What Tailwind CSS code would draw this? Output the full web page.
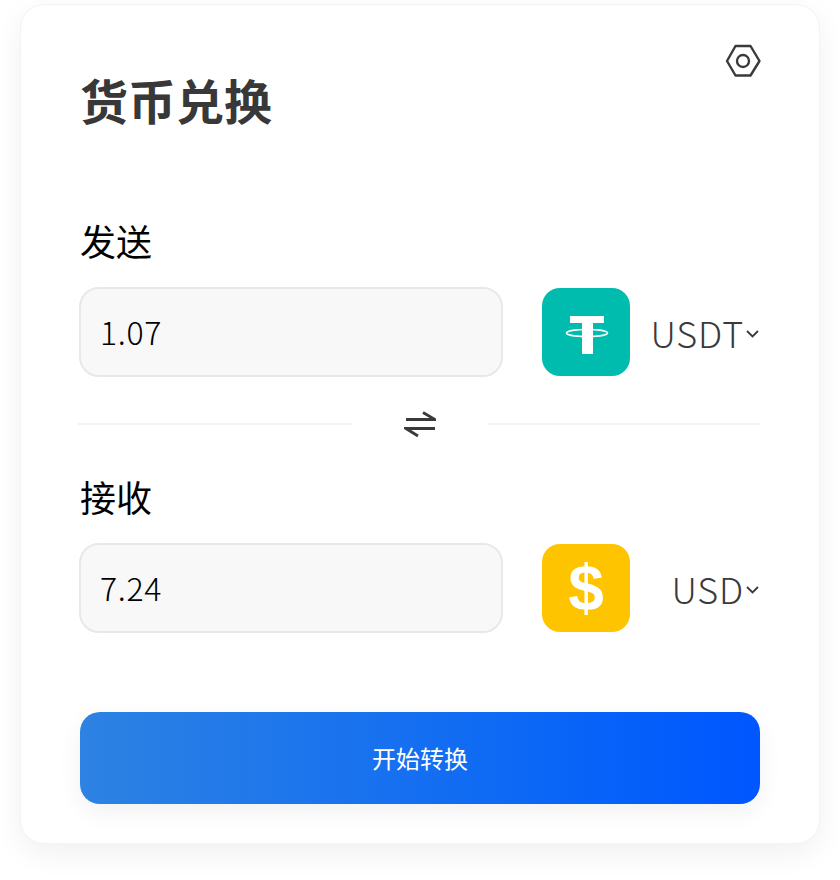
<!DOCTYPE html>
<html lang="zh-CN">
<head>
    <meta charset="UTF-8">
    <title>货币兑换</title>
    <script src="https://cdn.jsdelivr.net/npm/@tailwindcss/browser@4"></script>
</head>
<body class="bg-white font-['Noto_Sans_CJK_SC','Noto_Sans',sans-serif]">
    <div class="w-[840px] h-[880px] overflow-hidden pt-[4px] pl-[20px]">
        <!-- Card -->
        <main class="w-[800px] h-[840px] bg-white rounded-[24px] border border-[#f3f3f3] shadow-[0_10px_30px_rgba(0,0,0,0.06)] pt-[38px] px-[59px]">
            <div class="flex justify-end h-[36px] -mr-[1px] -mb-[16px]">
                <svg width="36" height="36" viewBox="0 0 36 36" fill="none" stroke="#3a3a3a" stroke-width="2.4" stroke-linejoin="round">
                    <path d="M10.5 3h15L34.500 18l-9 14.500h-15L2 18z"/>
                    <circle cx="18" cy="18" r="6"/>
                </svg>
            </div>
            <h1 class="text-[48px] leading-[72px] font-bold text-[#383838]">货币兑换</h1>

            <!-- Send -->
            <div class="mt-[78px] text-[36px] leading-[54px] text-black">发送</div>
            <div class="mt-[20px] flex items-center h-[90px] -ml-[1px]">
                <div class="w-[424px] h-[90px] bg-[#f8f8f8] border-2 border-[#e8e8e8] rounded-[20px] flex items-center pl-[19px] pb-[2px] text-[32px] tracking-[0.7px] text-black font-light">1.07</div>
                <div class="ml-[39px] w-[88px] h-[88px] rounded-[18px] bg-[#00bcae]">
                    <svg width="88" height="88" viewBox="0 0 88 88" fill="none">
                        <path d="M28 28h34v7H51v31H40V35H28z" fill="#fff"/>
                        <ellipse cx="45" cy="45" rx="20.500" ry="3.500" stroke="#fff" stroke-width="1.600"/>
                    </svg>
                </div>
                <div class="ml-auto flex items-center">
                    <span class="text-[36px] tracking-[0.8px] text-[#3a3a3a] font-light">USDT</span>
                    <svg class="ml-[1px] mt-[3px]" width="15" height="10" viewBox="0 0 15 10" fill="none" stroke="#3a3a3a" stroke-width="1.800"><path d="M2 2l5.500 5.500L13 2"/></svg>
                </div>
            </div>

            <!-- Divider -->
            <div class="mt-[10px] h-[74px] flex items-center -ml-[2px]">
                <div class="w-[274px] h-[2px] bg-[#f3f3f3]"></div>
                <div class="flex-1 flex justify-center">
                    <svg width="32" height="30" viewBox="0 0 32 30" fill="none" stroke="#3a3a3a" stroke-width="2.800">
                        <path d="M2 10.500h29L19 3.500"/>
                        <path d="M31 19.500H2L14 27"/>
                    </svg>
                </div>
                <div class="w-[272px] h-[2px] bg-[#f3f3f3]"></div>
            </div>

            <!-- Receive -->
            <div class="mt-[8px] text-[36px] leading-[54px] text-black">接收</div>
            <div class="mt-[20px] flex items-center h-[90px] -ml-[1px]">
                <div class="w-[424px] h-[90px] bg-[#f8f8f8] border-2 border-[#e8e8e8] rounded-[20px] flex items-center pl-[19px] pb-[2px] text-[32px] tracking-[0.7px] text-black font-light">7.24</div>
                <div class="ml-[39px] w-[88px] h-[88px] rounded-[18px] bg-[#ffc400] flex items-center justify-center">
                    <span class="text-[64px] leading-none font-bold text-white font-['Liberation_Sans',sans-serif]">$</span>
                </div>
                <div class="ml-auto flex items-center">
                    <span class="text-[36px] tracking-[0.8px] text-[#3a3a3a] font-light">USD</span>
                    <svg class="ml-[1px] mt-[3px]" width="15" height="10" viewBox="0 0 15 10" fill="none" stroke="#3a3a3a" stroke-width="1.800"><path d="M2 2l5.500 5.500L13 2"/></svg>
                </div>
            </div>

            <button class="mt-[79px] w-[680px] h-[92px] rounded-[20px] bg-gradient-to-r from-[#2d82e2] to-[#0056ff] shadow-[0_8px_24px_rgba(0,0,0,0.06)] text-white text-[24px]">开始转换</button>
        </main>
    </div>
</body>
</html>
